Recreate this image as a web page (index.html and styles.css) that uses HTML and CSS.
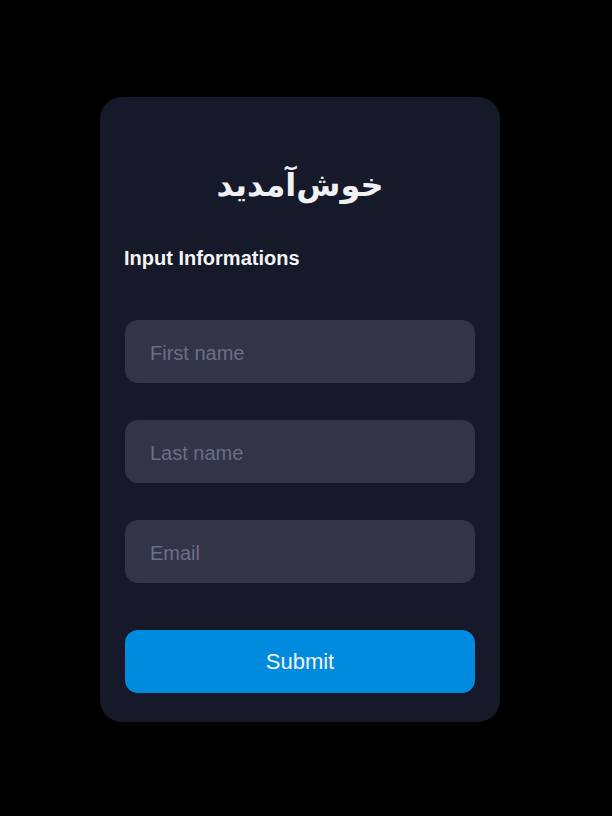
FILE: index.html
```html
<!DOCTYPE html>
<html lang="en">
<head>
<meta charset="utf-8">
<title>Form</title>
<link rel="stylesheet" href="styles.css">
</head>
<body>
<div class="card">
  <h1 class="title" dir="rtl">خوش‌آمدید</h1>
  <h2 class="label">Input Informations</h2>
  <form class="form">
    <input class="field" type="text" placeholder="First name">
    <input class="field" type="text" placeholder="Last name">
    <input class="field" type="email" placeholder="Email">
    <button class="submit" type="button">Submit</button>
  </form>
</div>
</body>
</html>
```
FILE: styles.css
```css
html, body {
  margin: 0;
  padding: 0;
  background: #000;
  height: 100%;
}
body {
  font-family: "Liberation Sans", "DejaVu Sans", sans-serif;
  padding-top: 97px;
  box-sizing: border-box;
}
.card {
  width: 400px;
  margin-left: 100px;
  box-sizing: border-box;
  background: #151929;
  border-radius: 22px;
  padding: 58px 25px 29px;
}
.title {
  margin: 0;
  text-align: center;
  color: #f1f1f3;
  font-family: "DejaVu Sans", sans-serif;
  font-size: 32px;
  font-weight: bold;
  line-height: 60px;
}
.label {
  margin: 32px 0 0 -1px;
  color: #f4f4f6;
  font-size: 20px;
  font-weight: bold;
  line-height: 23px;
}
.form {
  margin-top: 50px;
  display: flex;
  flex-direction: column;
  gap: 37px;
}
.field {
  height: 63px;
  box-sizing: border-box;
  border: none;
  outline: none;
  border-radius: 13px;
  background: #323447;
  padding: 3px 25px 0;
  font-family: "Liberation Sans", sans-serif;
  font-size: 20px;
  color: #e0e0e6;
}
.field::placeholder {
  color: #6c6e87;
}
.submit {
  margin-top: 10px;
  height: 63px;
  border: none;
  border-radius: 13px;
  background: #008bde;
  color: #f2f4f8;
  font-family: "Liberation Sans", sans-serif;
  font-size: 22px;
  cursor: pointer;
}
```
